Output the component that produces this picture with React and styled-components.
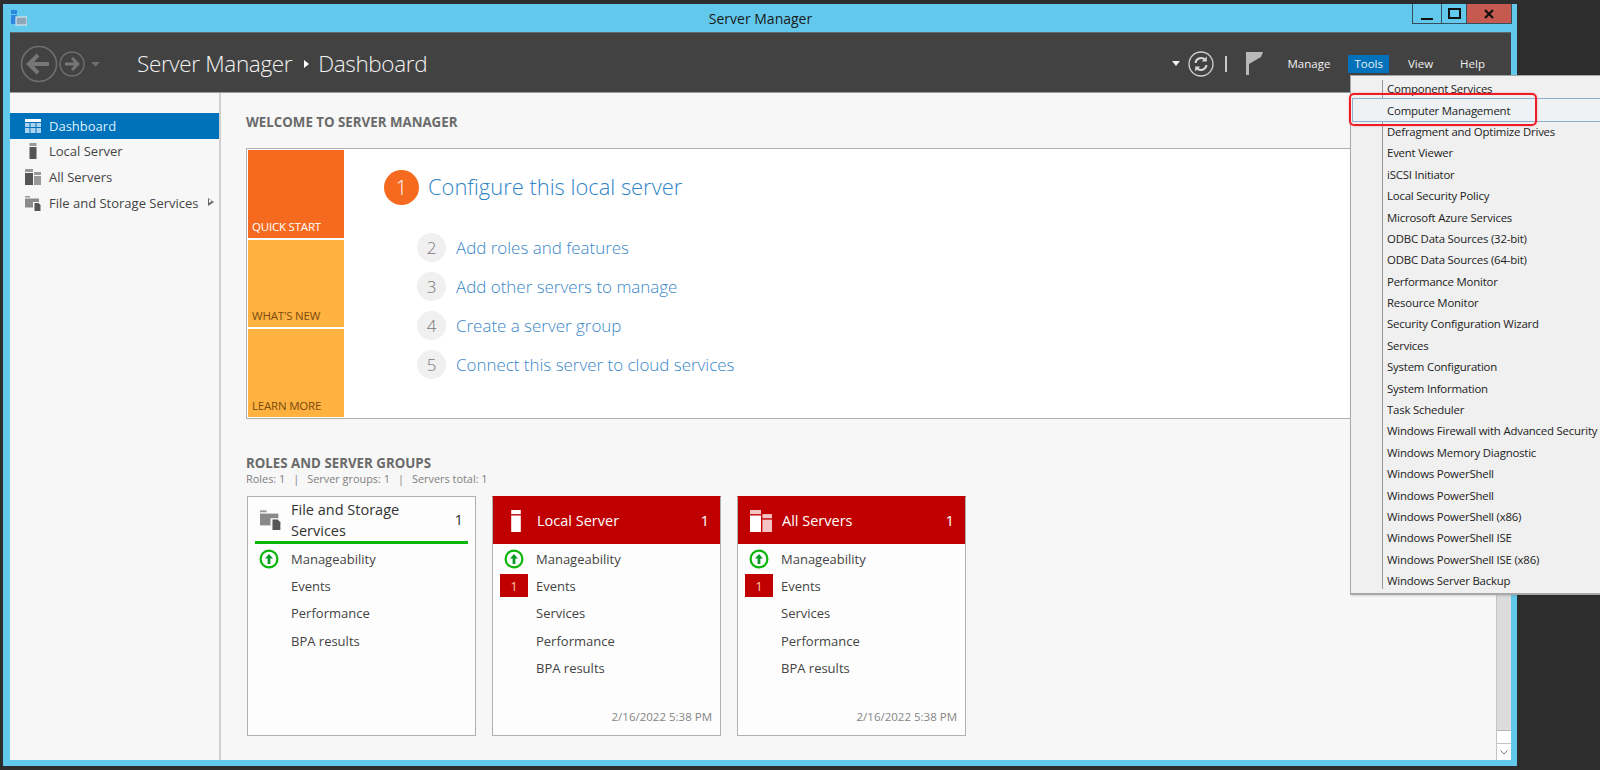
import React from 'react'
import styled, { createGlobalStyle } from 'styled-components'

const Global = createGlobalStyle`
  html, body { margin: 0; padding: 0; background: #2d2d2d; }
  * { box-sizing: border-box; }
  body { font-family: "Open Sans", "Noto Sans", "Liberation Sans", sans-serif; }
`

const Desktop = styled.div`
  position: relative;
  width: 1600px;
  height: 770px;
  overflow: hidden;
  padding: 4px 83px 4px 3px;
  background: #2d2d2d;
`

const Window = styled.div`
  height: 100%;
  display: flex;
  flex-direction: column;
  background: #63c9ec;
  padding: 0 6px 6px 7px;
`

const TitleBar = styled.div`
  position: relative;
  flex: 0 0 28px;
  display: flex;
  align-items: center;
  justify-content: center;
  font-size: 14px;
  color: #1a1a1a;
`

const AppIcon = styled.svg`
  position: absolute;
  left: 1px;
  top: 6px;
`

const Controls = styled.div`
  position: absolute;
  top: 0;
  right: -1px;
  display: flex;
  height: 20px;
  border: 1px solid #34505c;
  border-top: 0;
`

const Control = styled.div`
  width: ${p => p.$w}px;
  display: flex;
  align-items: center;
  justify-content: center;
  background: ${p => p.$close ? '#c75a50' : 'transparent'};
  border-left: ${p => p.$first ? '0' : '1px solid #34505c'};
`

const Header = styled.div`
  flex: 0 0 61px;
  display: flex;
  align-items: center;
  background: #424242;
  border-top: 1px solid #5f6a70;
  border-bottom: 1px solid #9a9a9a;
  padding: 2px 0 0 10px;
  color: #fff;
`

const NavIcons = styled.svg`
  flex: none;
`

const Breadcrumb = styled.div`
  display: flex;
  align-items: center;
  margin-left: 27px;
  font-size: 22.5px;
  font-weight: 300;
  color: #f2f2f2;
  letter-spacing: -0.35px;
`

const Crumb = styled.span`
  display: block;
`

const CrumbArrow = styled.i`
  width: 0;
  height: 0;
  margin: 0 9px 0 12px;
  border-left: 5px solid #fff;
  border-top: 4px solid transparent;
  border-bottom: 4px solid transparent;
`

const HeaderRight = styled.div`
  margin-left: auto;
  display: flex;
  align-items: center;
  padding-right: 20px;
`

const SyncIcon = styled.svg`
  margin-left: 8px;
`

const Divider = styled.svg`
  margin-left: 11px;
`

const FlagIcon = styled.svg`
  margin-left: 19px;
`

const MenuLink = styled.span`
  height: 18px;
  display: flex;
  align-items: center;
  padding: 0 6px;
  margin-left: ${p => p.$gap}px;
  font-size: 11.5px;
  color: #f0f0f0;
  background: ${p => p.$active ? '#0072bc' : 'transparent'};
`

const Content = styled.div`
  flex: 1;
  min-height: 0;
  display: flex;
  background: #f7f7f7;
`

const Sidebar = styled.nav`
  flex: 0 0 211px;
  padding-top: 20px;
  border-right: 2px solid #d0d0d0;
`

const NavItem = styled.div`
  position: relative;
  height: 25.6px;
  display: flex;
  align-items: center;
  gap: 8px;
  padding-left: 15px;
  font-size: 13px;
  color: ${p => p.$active ? '#dff0fb' : '#444'};
  background: ${p => p.$active ? '#0072bc' : 'transparent'};
`

const NavCaret = styled.i`
  position: absolute;
  right: 5px;
  top: 8px;
  width: 0;
  height: 0;
  border-left: 6px solid #666;
  border-top: 4.5px solid transparent;
  border-bottom: 4.5px solid transparent;

  &::after {
    content: '';
    position: absolute;
    left: -5px;
    top: -2.5px;
    border-left: 3px solid #f7f7f7;
    border-top: 2.5px solid transparent;
    border-bottom: 2.5px solid transparent;
  }
`

const Main = styled.main`
  flex: 1;
  min-width: 0;
  padding: 20px 31px 0 25px;
`

const SectionTitle = styled.h2`
  margin: 0;
  font-size: 13.3px;
  line-height: 18px;
  font-weight: 700;
  color: #6a6a6a;
`

const WelcomeBox = styled.div`
  display: flex;
  height: 271px;
  margin-top: 17px;
  background: #fff;
  border: 1px solid #b0b0b0;
  padding: 1px;
`

const Tiles = styled.div`
  flex: 0 0 96px;
  display: flex;
  flex-direction: column;
  gap: 2px;
`

const Tile = styled.div`
  flex: 1;
  display: flex;
  align-items: flex-end;
  padding: 0 0 4px 4px;
  font-size: 11.5px;
  letter-spacing: -0.2px;
  background: ${p => p.$hot ? '#f66a20' : '#ffb23f'};
  color: ${p => p.$hot ? '#fff' : '#7c4a10'};
`

const Steps = styled.div`
  padding: 20px 0 0 40px;
`

const MainStep = styled.div`
  display: flex;
  align-items: center;
  gap: 9px;
  height: 35px;
  font-size: 21.9px;
  font-weight: 300;
  color: #2f85c8;
`

const MainLabel = styled.span`
  margin-top: -2px;
`

const MainNumber = styled.span`
  width: 35px;
  height: 35px;
  border-radius: 50%;
  display: flex;
  align-items: center;
  justify-content: center;
  font-size: 20px;
  font-weight: 300;
  color: #fff;
  background: #f66a20;
`

const SubSteps = styled.div`
  display: flex;
  flex-direction: column;
  gap: 10px;
  margin: 28px 0 0 33px;
`

const SubStep = styled.div`
  display: flex;
  align-items: center;
  gap: 10px;
  height: 29px;
  font-size: 16.95px;
  font-weight: 300;
  color: #3a87c8;
`

const SubNumber = styled.span`
  width: 29px;
  height: 29px;
  border-radius: 50%;
  display: flex;
  align-items: center;
  justify-content: center;
  font-size: 17px;
  font-weight: 300;
  color: #777;
  background: #f0f0f0;
`

const GroupsTitle = styled(SectionTitle)`
  margin-top: 35px;
`

const GroupsInfo = styled.div`
  font-size: 10.9px;
  line-height: 14px;
  color: #808080;
`

const Sep = styled.span`
  margin: 0 8px;
`

const Cards = styled.div`
  display: flex;
  gap: 16px;
  margin: 10px 0 0 1px;
`

const Card = styled.div`
  width: 229px;
  height: 240px;
  display: flex;
  flex-direction: column;
  background: #fdfdfd;
  border: 1px solid #b0b0b0;
  border-top-color: ${p => p.$alert ? '#c00000' : '#b0b0b0'};
`

const CardHead = styled.div`
  flex: 0 0 47px;
  display: flex;
  align-items: center;
  margin: ${p => p.$alert ? '0 0 1px' : '0 7px 1px'};
  padding: ${p => p.$alert ? '0 11px 0 12px' : '0 5px 0 5px'};
  gap: ${p => p.$alert ? '10px' : '10px'};
  font-size: 14.5px;
  line-height: 21px;
  color: ${p => p.$alert ? '#fff' : '#333'};
  background: ${p => p.$alert ? '#c00000' : 'transparent'};
  border-bottom: ${p => p.$alert ? '0' : '3px solid #0ab60a'};
`

const CardName = styled.div`
  flex: 1;
  padding-top: ${p => p.$plain ? '0' : '2px'};
`

const CardCount = styled.span`
  font-size: 15px;
`

const CardRow = styled.div`
  height: 27.3px;
  display: flex;
  align-items: center;
  gap: 8px;
  padding-left: 7px;
  font-size: 13px;
  color: #444;
`

const Slot = styled.span`
  flex: 0 0 28px;
  height: 23px;
  display: flex;
  align-items: center;
  justify-content: center;
  font-size: 13px;
  color: ${p => p.$alert ? '#f5c9a0' : 'inherit'};
  background: ${p => p.$alert ? '#c00000' : 'transparent'};
`

const Stamp = styled.div`
  margin-top: auto;
  padding: 0 8px 11px 0;
  text-align: right;
  font-size: 11.5px;
  color: #858585;
`

const Scrollbar = styled.div`
  flex: 0 0 15px;
  display: flex;
  flex-direction: column;
  justify-content: flex-end;
  background: #dcdcdc;
  border-left: 1px solid #c4c4c4;
`

const ScrollGap = styled.div`
  height: 13px;
  background: #fff;
  border-top: 1px solid #b8b8b8;
`

const ScrollButton = styled.div`
  height: 17px;
  display: flex;
  align-items: center;
  justify-content: center;
  background: #fff;
  border-top: 1px solid #c4c4c4;
`

const ToolsMenu = styled.div`
  position: absolute;
  left: 1350px;
  top: 75px;
  width: 250px;
  height: 520px;
  padding: 2px 0 0 0;
  background: #f0f0f0;
  border: 1px solid #a8a8a8;
  border-right: 0;
  border-bottom-width: 2px;
  box-shadow: 1px 1px 2px rgba(0, 0, 0, 0.15);

  &::before {
    content: '';
    position: absolute;
    left: 31px;
    top: 4px;
    bottom: 4px;
    width: 1px;
    background: #9a9a9a;
  }
`

const MenuItem = styled.div`
  position: relative;
  height: 21.4px;
  display: flex;
  align-items: center;
  margin-left: 2px;
  padding-left: 34px;
  font-size: 11.4px;
  letter-spacing: -0.2px;
  white-space: nowrap;
  color: #222;
  ${p => p.$hover && `
    background: #eef2f5;
    outline: 1px solid #8fb0cc;
    outline-offset: 0;
  `}
`

const RedMark = styled.div`
  position: absolute;
  left: 1349px;
  top: 93px;
  width: 188px;
  height: 33px;
  border: 2px solid #ee1c25;
  border-radius: 5px;
  box-shadow: 0 0 2px rgba(238, 28, 37, 0.4);
`

const toolNames = [
  'Component Services', 'Computer Management', 'Defragment and Optimize Drives', 'Event Viewer',
  'iSCSI Initiator', 'Local Security Policy', 'Microsoft Azure Services', 'ODBC Data Sources (32-bit)',
  'ODBC Data Sources (64-bit)', 'Performance Monitor', 'Resource Monitor', 'Security Configuration Wizard',
  'Services', 'System Configuration', 'System Information', 'Task Scheduler',
  'Windows Firewall with Advanced Security', 'Windows Memory Diagnostic', 'Windows PowerShell', 'Windows PowerShell',
  'Windows PowerShell (x86)', 'Windows PowerShell ISE', 'Windows PowerShell ISE (x86)', 'Windows Server Backup',
]

const DashboardIcon = () => (
  <svg width="16" height="14" viewBox="0 0 16 14">
    <rect x="0" y="0" width="16" height="3" fill="#fff" />
    <g fill="#a9d3ee">
      <rect x="0" y="4" width="4.5" height="4" /><rect x="5.5" y="4" width="5" height="4" /><rect x="11.5" y="4" width="4.5" height="4" />
      <rect x="0" y="9" width="4.5" height="5" /><rect x="5.5" y="9" width="5" height="5" /><rect x="11.5" y="9" width="4.5" height="5" />
    </g>
  </svg>
)

const TowerIcon = ({ color = '#555', top = '#999', size = 16 }) => (
  <svg width={size} height={size} viewBox="0 0 16 16">
    <rect x="4.5" y="0" width="7" height="3" fill={top} />
    <rect x="4.5" y="4" width="7" height="12" fill={color} />
  </svg>
)

const ServersIcon = ({ big, light = '#999', dark = '#555' }) => (
  <svg width={big ? 22 : 16} height={big ? 22 : 16} viewBox="0 0 16 16">
    <rect x="0" y="0" width="8" height="3" fill={light} />
    <rect x="0" y="4" width="8" height="12" fill={dark} />
    <rect x="9" y="3" width="7" height="3" fill={light} />
    <rect x="9" y="7" width="7" height="9" fill={light} />
  </svg>
)

const StorageIcon = ({ big }) => (
  <svg width={big ? 21 : 16} height={big ? 21 : 16} viewBox="0 0 16 16">
    <path d="M0 1h5v1.5h-5z" fill="#999" />
    <path d="M0 3.5h14v9h-14z" fill="#8a8a8a" />
    <path d="M8 7h8v9h-8z" fill="#f7f7f7" />
    <path d="M9.5 8h4l2 2v6h-6z" fill="#555" />
  </svg>
)

const UpIcon = () => (
  <svg width="20" height="20" viewBox="0 0 20 20">
    <circle cx="10" cy="10" r="8.4" fill="#fff" stroke="#0ab60a" strokeWidth="2.2" />
    <path d="M10 5l4 4.5h-2.6V15H8.6V9.5H6z" fill="#0a9a2a" />
  </svg>
)

const StatusRow = ({ children }) => (
  <CardRow><Slot><UpIcon /></Slot>{children}</CardRow>
)

const EventsRow = ({ count }) => (
  <CardRow><Slot $alert={!!count}>{count}</Slot>Events</CardRow>
)

const PlainRow = ({ children }) => (
  <CardRow><Slot />{children}</CardRow>
)

const ServerCard = ({ name, icon }) => (
  <Card $alert>
    <CardHead $alert>
      {icon}
      <CardName $plain>{name}</CardName>
      <CardCount>1</CardCount>
    </CardHead>
    <StatusRow>Manageability</StatusRow>
    <EventsRow count="1" />
    <PlainRow>Services</PlainRow>
    <PlainRow>Performance</PlainRow>
    <PlainRow>BPA results</PlainRow>
    <Stamp>2/16/2022 5:38 PM</Stamp>
  </Card>
)

const App = () => (
  <Desktop>
    <Global />
    <Window>
      <TitleBar>
        <AppIcon width="16" height="16" viewBox="0 0 16 16">
          <rect x="0" y="0" width="6" height="4" fill="#2e86de" />
          <rect x="0" y="5" width="6" height="9" fill="#2e86de" />
          <rect x="5" y="7" width="11" height="8" fill="#8fa6b8" stroke="#e8eef2" strokeWidth="1" />
        </AppIcon>
        Server Manager
        <Controls>
          <Control $w={28} $first>
            <svg width="12" height="12" viewBox="0 0 12 12"><rect x="0" y="10" width="12" height="2" fill="#111" /></svg>
          </Control>
          <Control $w={25}>
            <svg width="13" height="11" viewBox="0 0 13 11"><rect x="1" y="1" width="11" height="9" fill="none" stroke="#111" strokeWidth="2" /></svg>
          </Control>
          <Control $w={45} $close>
            <svg width="10" height="10" viewBox="0 0 10 10"><path d="M1 1l8 8M9 1l-8 8" stroke="#111" strokeWidth="2.2" /></svg>
          </Control>
        </Controls>
      </TitleBar>
      <Header>
        <NavIcons width="90" height="40" viewBox="0 0 90 40" fill="none">
          <circle cx="19" cy="20" r="17.5" stroke="#6f6f6f" strokeWidth="1.6" />
          <path d="M9 20h20M18 11l-9 9 9 9" stroke="#777" strokeWidth="4" />
          <circle cx="52" cy="20" r="12" stroke="#6f6f6f" strokeWidth="1.4" />
          <path d="M45 20h13M52 14l6 6-6 6" stroke="#777" strokeWidth="2.8" />
          <path d="M71 18h9l-4.5 4.5z" fill="#6f6f6f" />
        </NavIcons>
        <Breadcrumb>
          <Crumb>Server Manager</Crumb>
          <CrumbArrow />
          <Crumb>Dashboard</Crumb>
        </Breadcrumb>
        <HeaderRight>
          <svg width="8" height="5" viewBox="0 0 8 5"><path d="M0 0h8l-4 5z" fill="#f0f0f0" /></svg>
          <SyncIcon width="26" height="26" viewBox="0 0 26 26" fill="none">
            <circle cx="13" cy="13" r="12" stroke="#cfcfcf" strokeWidth="1.3" />
            <path d="M7.5 12a5.6 5.6 0 0 1 9.8-3M18.5 14a5.6 5.6 0 0 1-9.8 3" stroke="#d8d8d8" strokeWidth="2" />
            <path d="M18.8 5.5v5h-5zM7.2 20.5v-5h5z" fill="#d8d8d8" />
          </SyncIcon>
          <Divider width="2" height="16" viewBox="0 0 2 16"><rect width="2" height="16" fill="#c8c8c8" /></Divider>
          <FlagIcon width="17" height="23" viewBox="0 0 17 23">
            <rect x="0" y="0" width="3" height="23" fill="#b8b8b8" />
            <path d="M3 0h14l-2 5 -12 7z" fill="#b8b8b8" />
          </FlagIcon>
          <MenuLink $gap={19}>Manage</MenuLink>
          <MenuLink $gap={12} $active>Tools</MenuLink>
          <MenuLink $gap={13}>View</MenuLink>
          <MenuLink $gap={15}>Help</MenuLink>
        </HeaderRight>
      </Header>
      <Content>
        <Sidebar>
          <NavItem $active><DashboardIcon />Dashboard</NavItem>
          <NavItem><TowerIcon />Local Server</NavItem>
          <NavItem><ServersIcon />All Servers</NavItem>
          <NavItem><StorageIcon />File and Storage Services<NavCaret /></NavItem>
        </Sidebar>
        <Main>
          <SectionTitle>WELCOME TO SERVER MANAGER</SectionTitle>
          <WelcomeBox>
            <Tiles>
              <Tile $hot>QUICK START</Tile>
              <Tile>WHAT'S NEW</Tile>
              <Tile>LEARN MORE</Tile>
            </Tiles>
            <Steps>
              <MainStep><MainNumber>1</MainNumber><MainLabel>Configure this local server</MainLabel></MainStep>
              <SubSteps>
                <SubStep><SubNumber>2</SubNumber>Add roles and features</SubStep>
                <SubStep><SubNumber>3</SubNumber>Add other servers to manage</SubStep>
                <SubStep><SubNumber>4</SubNumber>Create a server group</SubStep>
                <SubStep><SubNumber>5</SubNumber>Connect this server to cloud services</SubStep>
              </SubSteps>
            </Steps>
          </WelcomeBox>
          <GroupsTitle>ROLES AND SERVER GROUPS</GroupsTitle>
          <GroupsInfo>Roles: 1<Sep>|</Sep>Server groups: 1<Sep>|</Sep>Servers total: 1</GroupsInfo>
          <Cards>
            <Card>
              <CardHead>
                <StorageIcon big />
                <CardName>File and Storage Services</CardName>
                <CardCount>1</CardCount>
              </CardHead>
              <StatusRow>Manageability</StatusRow>
              <EventsRow />
              <PlainRow>Performance</PlainRow>
              <PlainRow>BPA results</PlainRow>
            </Card>
            <ServerCard name="Local Server" icon={<TowerIcon color="#fff" top="#fff" size={22} />} />
            <ServerCard name="All Servers" icon={<ServersIcon big light="#f4c4c4" dark="#fff" />} />
          </Cards>
        </Main>
        <Scrollbar>
          <ScrollGap />
          <ScrollButton>
            <svg width="8" height="5" viewBox="0 0 8 5" fill="none"><path d="M0.5 0.5L4 4l3.5-3.5" stroke="#777" /></svg>
          </ScrollButton>
        </Scrollbar>
      </Content>
    </Window>
    <ToolsMenu>
      {toolNames.map((name, i) => (
        <MenuItem key={i} $hover={name === 'Computer Management'}>{name}</MenuItem>
      ))}
    </ToolsMenu>
    <RedMark />
  </Desktop>
)

export default App
